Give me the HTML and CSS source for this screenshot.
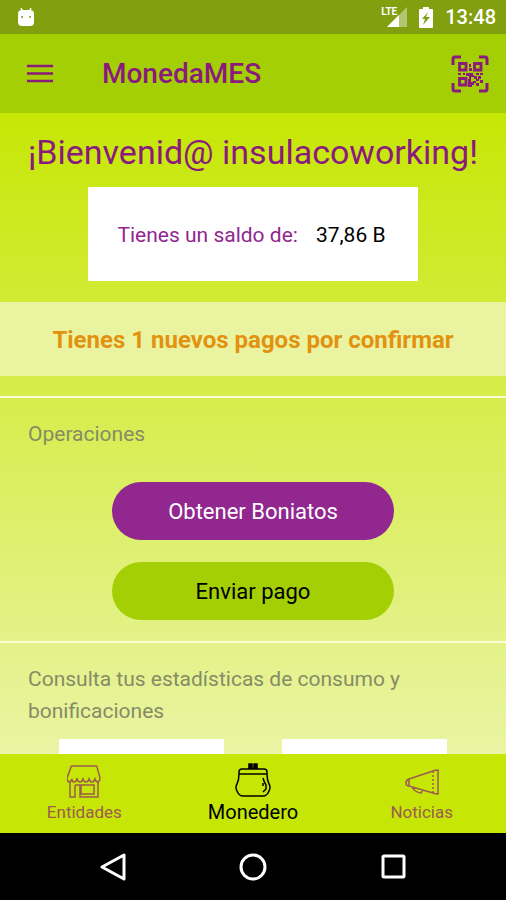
FILE: index.html
```html
<!DOCTYPE html>
<html lang="es">
<head>
<meta charset="utf-8">
<meta name="viewport" content="width=device-width, initial-scale=1">
<title>MonedaMES</title>
<link rel="stylesheet" href="styles.css">
</head>
<body>
<div class="status-bar">
  <svg class="status-robot" width="18" height="20" viewBox="0 0 18 20" aria-hidden="true">
    <path d="M4 1l2 4M14 1l-2 4" stroke="#fff" stroke-width="1.5" fill="none"/>
    <rect x="1" y="3" width="16" height="16" rx="4" fill="#fff"/>
    <circle cx="5" cy="10" r="1" fill="#829f10"/><circle cx="13" cy="10" r="1" fill="#829f10"/>
  </svg>
  <div class="signal">
    <span class="lte">LTE</span>
    <svg width="20" height="20" viewBox="0 0 20 20" aria-hidden="true">
      <path d="M20 0V20H0z" fill="#fff" opacity=".4"/>
      <path d="M12 8V20H0z" fill="#fff"/>
    </svg>
  </div>
  <svg width="14" height="21" viewBox="0 0 14 21" aria-hidden="true">
    <path d="M4 0h6v2h3q1 0 1 1v17q0 1-1 1H1q-1 0-1-1V3q0-1 1-1h3z" fill="#fff"/>
    <path d="M9 5l-6 7h3l-2 6 7-8H7z" fill="#829f10"/>
  </svg>
  <time class="clock">13:48</time>
</div>

<header class="app-bar">
  <button class="icon-button" type="button" aria-label="Menú">
    <svg width="28" height="20" viewBox="0 0 28 20" aria-hidden="true">
      <path d="M1 2h26M1 9.500h26M1 17h26" stroke="#8a1a7c" stroke-width="2.5"/>
    </svg>
  </button>
  <h1 class="app-title">MonedaMES</h1>
  <button class="icon-button" type="button" aria-label="Escanear código QR">
    <svg width="38" height="38" viewBox="0 0 38 38" fill="none" stroke="#8a1a7c" aria-hidden="true">
      <path stroke-width="3" d="M2 10V4q0-2 2-2h6M28 2h6q2 0 2 2v6M36 28v6q0 2-2 2h-6M10 36H4q-2 0-2-2v-6"/>
      <path stroke-width="2.8" d="M8.500 8.500h6.500v6.500H8.500zM23.500 8.500h6.500v6.500h-6.500zM8.500 23.500h6.500v6.500H8.500z"/>
      <path fill="#8a1a7c" stroke="none" d="M18 9h2v3h-2zM18 13h3v3h-3zM7 18h3v2H7zM12 18h2v2h-2zM15 18h7v2h1v2h-3v2h-2v-3h-3zM25 18h3v2h-3zM29 18h3v2h-3zM17 24h3v3h3v3h-2v2h-4zM23 21h3v3h-3zM27 21h3v3h-3zM25 24h3v2h-3zM29 25h3v3h-3zM22 26h3v2h-3zM25 28h3v3h-3z"/>
    </svg>
  </button>
</header>

<main class="content">
  <h2 class="welcome">¡Bienvenid@ insulacoworking!</h2>
  <p class="balance"><span>Tienes un saldo de:</span><strong class="amount">37,86 B</strong></p>
  <a class="notice" href="#pagos">Tienes 1 nuevos pagos por confirmar</a>
  <section class="operations">
    <h3 class="section-title">Operaciones</h3>
    <button class="pill pill-primary" type="button">Obtener Boniatos</button>
    <button class="pill" type="button">Enviar pago</button>
  </section>
  <section class="stats">
    <h3 class="section-title">Consulta tus estadísticas de consumo y bonificaciones</h3>
    <div class="cards"><div class="card"></div><div class="card"></div></div>
  </section>
</main>

<nav class="tabs">
  <a class="tab" href="#entidades">
    <svg width="34" height="36" viewBox="0 0 34 36" fill="none" stroke="currentColor" stroke-width="1.5" aria-hidden="true">
      <path d="M5 3h24q1 0 1 1l3 11q0 3-2 4-2 0-3-3-1 3-3 3t-3-3q-1 3-3 3t-3-3q-1 3-3 3t-3-3q-1 3-3 3t-2-3q-1 3-3 3-2-1-2-4L4 4q0-1 1-1z"/>
      <path d="M3 19v15h5V23q0-1 1-1h4v12h18V19M14 22h13v9H14z"/>
    </svg>
    <span>Entidades</span>
  </a>
  <a class="tab tab-active" href="#monedero" aria-current="page">
    <svg width="36" height="36" viewBox="0 0 36 36" fill="none" stroke="currentColor" stroke-width="1.5" aria-hidden="true">
      <rect x="14" y="1" width="3" height="3" fill="currentColor"/><rect x="19" y="1" width="3" height="3" fill="currentColor"/>
      <path d="M13 5h10M7 6h22q3 0 3 3v2H4V9q0-3 3-3zM4 11q0 6-2 10-2 3 0 7 2 5 6 5h20q4 0 6-5 2-4 0-7-2-4-2-10M28 15q1 4 3 7v4l-3 3M28 20v3"/>
    </svg>
    <span>Monedero</span>
  </a>
  <a class="tab" href="#noticias">
    <svg width="36" height="36" viewBox="0 0 36 36" fill="none" stroke="currentColor" stroke-width="1.5" aria-hidden="true">
      <path d="M5 16L29 8q2-1 5-1v24q-3 0-5-1L5 23q-3 0-3-3t3-4zM5 16v7M8 24l2 3q4 3 7 3l2-3"/>
      <path d="M29 8v22" stroke-dasharray="2 2"/>
    </svg>
    <span>Noticias</span>
  </a>
</nav>

<div class="system-nav">
  <button type="button" aria-label="Atrás"><svg width="28" height="28" viewBox="0 0 28 28" aria-hidden="true"><path d="M25 2v24L3 14z"/></svg></button>
  <button type="button" aria-label="Inicio"><svg width="28" height="28" viewBox="0 0 28 28" aria-hidden="true"><circle cx="14" cy="14" r="12"/></svg></button>
  <button type="button" aria-label="Recientes"><svg width="28" height="28" viewBox="0 0 28 28" aria-hidden="true"><rect x="4" y="3" width="21" height="21" rx="1"/></svg></button>
</div>
</body>
</html>
```
FILE: styles.css
```css
* { box-sizing: border-box; }

body {
  margin: 0;
  height: 100vh;
  display: flex;
  flex-direction: column;
  font-family: Roboto, sans-serif;
  font-size: 21px;
  line-height: 32px;
  color: #000;
}

h1, h2, h3, p { margin: 0; font-weight: 400; }
a { text-decoration: none; }
button { font: inherit; border: 0; padding: 0; background: none; }
svg { display: block; }

.status-bar {
  height: 34px;
  flex: none;
  display: flex;
  align-items: center;
  gap: 12px;
  padding: 0 10px 0 17px;
  background: #829f10;
  color: #fff;
}
.status-robot { margin-right: auto; }
.signal { display: flex; position: relative; }
.lte {
  position: absolute;
  right: 10px;
  top: 0;
  font-size: 10px;
  line-height: 10px;
  font-weight: 700;
}
.clock { font-size: 20px; font-weight: 500; }

.app-bar {
  height: 79px;
  flex: none;
  display: flex;
  align-items: center;
  padding: 0 17px 0 26px;
  background: #a5cf05;
}
.app-title {
  flex: 1;
  padding-left: 48px;
  font-size: 28px;
  font-weight: 500;
  color: #8a1a7c;
}

.content {
  flex: 1;
  min-height: 0;
  overflow: hidden;
  display: flex;
  flex-direction: column;
  padding-top: 19px;
  background: linear-gradient(#c6e705, #eaf4a4);
}
.content > * { flex: none; }
.welcome {
  font-size: 34px;
  line-height: 40px;
  text-align: center;
  white-space: nowrap;
  color: #8a1a7c;
}
.balance {
  align-self: center;
  display: flex;
  gap: 18px;
  margin: 15px 0 21px;
  padding: 32px 32px 30px 29px;
  background: #fff;
  color: #92278f;
}
.amount { font-weight: 400; color: #000; }
.notice {
  display: block;
  padding: 22px 0 20px;
  background: #eaf4a0;
  text-align: center;
  font-size: 24px;
  font-weight: 700;
  color: #e39210;
}
.operations, .stats { border-top: 2px solid #fafdd8; }
.operations {
  display: flex;
  flex-direction: column;
  align-items: center;
  margin-top: 20px;
  padding: 20px 28px 21px;
}
.section-title { align-self: stretch; font-size: 21px; color: #858c66; }
.pill {
  width: 282px;
  height: 58px;
  margin-top: 22px;
  padding-top: 2px;
  border-radius: 29px;
  background: #a5cf05;
  font-size: 22px;
  color: #000;
}
.pill-primary { margin-top: 32px; background: #92278f; color: #fff; }
.stats { padding: 20px 28px; }
.cards {
  display: grid;
  grid-template-columns: 1fr 1fr;
  gap: 58px;
  margin: 12px 31px 0;
}
.card { height: 120px; background: #fff; }

.tabs {
  flex: none;
  display: grid;
  grid-template-columns: repeat(3, 1fr);
  height: 79px;
  background: #c6e705;
}
.tab {
  display: flex;
  flex-direction: column;
  align-items: center;
  padding-top: 9px;
  font-size: 17px;
  line-height: 26px;
  color: #9c5c50;
}
.tab-active { font-size: 20px; color: #000; }

.system-nav {
  flex: none;
  height: 67px;
  display: flex;
  justify-content: center;
  align-items: center;
  gap: 112px;
  background: #000;
}
.system-nav svg { fill: none; stroke: #fff; stroke-width: 3; stroke-linejoin: round; }
```
